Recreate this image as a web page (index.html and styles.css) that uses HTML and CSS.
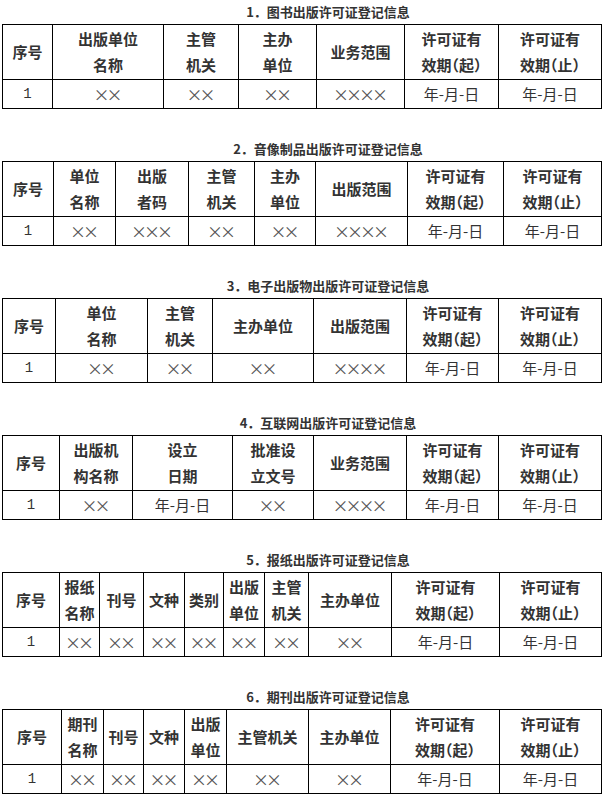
FILE: index.html
```html
<!DOCTYPE html>
<html lang="zh-CN">
<head>
<meta charset="utf-8">
<title>出版许可证登记信息</title>
<link rel="stylesheet" href="styles.css">
</head>
<body>
<div class="page">

  <section class="sec">
    <p class="title">1．图书出版许可证登记信息</p>
    <table class="t1">
      <colgroup><col><col><col><col><col><col><col></colgroup>
      <tr>
        <th>序号</th><th>出版单位<br>名称</th><th>主管<br>机关</th><th>主办<br>单位</th><th>业务范围</th><th>许可证有<br>效期（起）</th><th>许可证有<br>效期（止）</th>
      </tr>
      <tr>
        <td class="num">1</td><td class="x">××</td><td class="x">××</td><td class="x">××</td><td class="x">××××</td><td>年-月-日</td><td>年-月-日</td>
      </tr>
    </table>
  </section>

  <section class="sec">
    <p class="title">2．音像制品出版许可证登记信息</p>
    <table class="t2">
      <colgroup><col><col><col><col><col><col><col><col></colgroup>
      <tr>
        <th>序号</th><th>单位<br>名称</th><th>出版<br>者码</th><th>主管<br>机关</th><th>主办<br>单位</th><th>出版范围</th><th>许可证有<br>效期（起）</th><th>许可证有<br>效期（止）</th>
      </tr>
      <tr>
        <td class="num">1</td><td class="x">××</td><td class="x">×××</td><td class="x">××</td><td class="x">××</td><td class="x">××××</td><td>年-月-日</td><td>年-月-日</td>
      </tr>
    </table>
  </section>

  <section class="sec">
    <p class="title">3．电子出版物出版许可证登记信息</p>
    <table class="t3">
      <colgroup><col><col><col><col><col><col><col></colgroup>
      <tr>
        <th>序号</th><th>单位<br>名称</th><th>主管<br>机关</th><th>主办单位</th><th>出版范围</th><th>许可证有<br>效期（起）</th><th>许可证有<br>效期（止）</th>
      </tr>
      <tr>
        <td class="num">1</td><td class="x">××</td><td class="x">××</td><td class="x">××</td><td class="x">××××</td><td>年-月-日</td><td>年-月-日</td>
      </tr>
    </table>
  </section>

  <section class="sec">
    <p class="title">4．互联网出版许可证登记信息</p>
    <table class="t4">
      <colgroup><col><col><col><col><col><col><col></colgroup>
      <tr>
        <th>序号</th><th>出版机<br>构名称</th><th>设立<br>日期</th><th>批准设<br>立文号</th><th>业务范围</th><th>许可证有<br>效期（起）</th><th>许可证有<br>效期（止）</th>
      </tr>
      <tr>
        <td class="num">1</td><td class="x">××</td><td>年-月-日</td><td class="x">××</td><td class="x">××××</td><td>年-月-日</td><td>年-月-日</td>
      </tr>
    </table>
  </section>

  <section class="sec">
    <p class="title">5．报纸出版许可证登记信息</p>
    <table class="t5">
      <colgroup><col><col><col><col><col><col><col><col><col><col></colgroup>
      <tr>
        <th>序号</th><th>报纸<br>名称</th><th>刊号</th><th>文种</th><th>类别</th><th>出版<br>单位</th><th>主管<br>机关</th><th>主办单位</th><th>许可证有<br>效期（起）</th><th>许可证有<br>效期（止）</th>
      </tr>
      <tr>
        <td class="num">1</td><td class="x">××</td><td class="x">××</td><td class="x">××</td><td class="x">××</td><td class="x">××</td><td class="x">××</td><td class="x">××</td><td>年-月-日</td><td>年-月-日</td>
      </tr>
    </table>
  </section>

  <section class="sec">
    <p class="title">6．期刊出版许可证登记信息</p>
    <table class="t6">
      <colgroup><col><col><col><col><col><col><col><col><col></colgroup>
      <tr>
        <th>序号</th><th>期刊<br>名称</th><th>刊号</th><th>文种</th><th>出版<br>单位</th><th>主管机关</th><th>主办单位</th><th>许可证有<br>效期（起）</th><th>许可证有<br>效期（止）</th>
      </tr>
      <tr>
        <td class="num">1</td><td class="x">××</td><td class="x">××</td><td class="x">××</td><td class="x">××</td><td class="x">××</td><td class="x">××</td><td>年-月-日</td><td>年-月-日</td>
      </tr>
    </table>
  </section>

</div>
</body>
</html>
```
FILE: styles.css
```css
html, body {
  margin: 0;
  padding: 0;
  background: #fff;
}

body {
  font-family: "Noto Sans CJK SC", "Noto Sans", sans-serif;
  color: #333;
}

.page {
  padding-left: 2px;
}

.sec + .sec {
  margin-top: 28px;
}

.title {
  box-sizing: border-box;
  width: 600px;
  margin: 0;
  padding-left: 52px;
  height: 24px;
  line-height: 24px;
  font-size: 13px;
  font-weight: 700;
  text-align: center;
  color: #333;
}

table {
  border-collapse: collapse;
  table-layout: fixed;
  width: 600px;
}

th, td {
  border: 1px solid #000;
  padding: 1px 0;
  text-align: center;
  vertical-align: middle;
  white-space: nowrap;
  overflow: hidden;
  line-height: 26px;
}

th {
  font-size: 15px;
  font-weight: 700;
  color: #333;
  font-feature-settings: "halt";
}

td {
  font-size: 15px;
  font-weight: 400;
  color: #333;
}

td.x {
  font-family: "Noto Sans CJK SC", sans-serif;
  font-weight: 400;
  font-size: 16px;
  letter-spacing: -3px;
  text-indent: -3px;
  color: #555;
}

td.num {
  font-family: "Liberation Mono", monospace;
  font-size: 14px;
  color: #333;
}

/* column widths */
.t1 col:nth-child(1) { width: 50px; }
.t1 col:nth-child(2) { width: 111px; }
.t1 col:nth-child(3) { width: 75px; }
.t1 col:nth-child(4) { width: 78px; }
.t1 col:nth-child(5) { width: 88px; }
.t1 col:nth-child(6) { width: 94px; }
.t1 col:nth-child(7) { width: 103px; }

.t2 col:nth-child(1) { width: 51px; }
.t2 col:nth-child(2) { width: 62px; }
.t2 col:nth-child(3) { width: 73px; }
.t2 col:nth-child(4) { width: 66px; }
.t2 col:nth-child(5) { width: 61px; }
.t2 col:nth-child(6) { width: 92px; }
.t2 col:nth-child(7) { width: 96px; }
.t2 col:nth-child(8) { width: 98px; }

.t3 col:nth-child(1) { width: 53px; }
.t3 col:nth-child(2) { width: 92px; }
.t3 col:nth-child(3) { width: 65px; }
.t3 col:nth-child(4) { width: 101px; }
.t3 col:nth-child(5) { width: 93px; }
.t3 col:nth-child(6) { width: 92px; }
.t3 col:nth-child(7) { width: 103px; }

.t4 col:nth-child(1) { width: 57px; }
.t4 col:nth-child(2) { width: 73px; }
.t4 col:nth-child(3) { width: 100px; }
.t4 col:nth-child(4) { width: 81px; }
.t4 col:nth-child(5) { width: 93px; }
.t4 col:nth-child(6) { width: 92px; }
.t4 col:nth-child(7) { width: 103px; }

.t5 col:nth-child(1) { width: 57px; }
.t5 col:nth-child(2) { width: 40px; }
.t5 col:nth-child(3) { width: 44px; }
.t5 col:nth-child(4) { width: 41px; }
.t5 col:nth-child(5) { width: 39px; }
.t5 col:nth-child(6) { width: 41px; }
.t5 col:nth-child(7) { width: 44px; }
.t5 col:nth-child(8) { width: 83px; }
.t5 col:nth-child(9) { width: 108px; }
.t5 col:nth-child(10) { width: 102px; }

.t6 col:nth-child(1) { width: 59px; }
.t6 col:nth-child(2) { width: 42px; }
.t6 col:nth-child(3) { width: 40px; }
.t6 col:nth-child(4) { width: 41px; }
.t6 col:nth-child(5) { width: 42px; }
.t6 col:nth-child(6) { width: 82px; }
.t6 col:nth-child(7) { width: 82px; }
.t6 col:nth-child(8) { width: 109px; }
.t6 col:nth-child(9) { width: 102px; }
```
